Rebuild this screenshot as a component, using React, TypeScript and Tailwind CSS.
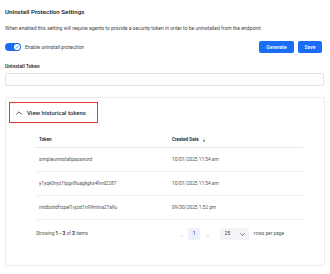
import React from "react";

const rows = [
  { token: "simpleuninstallpassword", date: "10/01/2025 11:54 am" },
  { token: "y1yqk0nyz1lpgv8luagkgkx4fvrd2287", date: "10/01/2025 11:54 am" },
  { token: "nndbohdfrzpel1vjzxt1n99mtva27a9u", date: "09/30/2025 1:52 pm" },
];

export default function App() {
  return (
    <div
      className="w-[330px] h-[274px] bg-white px-[5px] text-[#333]"
      style={{ fontFamily: "Roboto, 'Liberation Sans', sans-serif" }}
    >
      <div className="pt-[8px] text-[6.2px] leading-[8px] font-semibold text-[#2a2a2a]">
        Uninstall Protection Settings
      </div>
      <div className="mt-[9px] text-[5px] leading-[7px] text-[#444]">
        When enabled this setting will require agents to provide a security token in order to be uninstalled from the endpoint.
      </div>
      <div className="mt-[9px] flex items-center h-[12px]">
        <div className="flex items-center gap-[4px]">
          <div className="w-[16px] h-[8px] rounded-full bg-[#1a6cf5] flex items-center justify-end pr-[1px]">
            <div className="w-[6px] h-[6px] rounded-full bg-white flex items-center justify-center">
              <svg width="4" height="4" viewBox="0 0 10 10">
                <path d="M2 5.2 L4.2 7.2 L8 2.8" fill="none" stroke="#1a6cf5" strokeWidth="1.8" strokeLinecap="round" strokeLinejoin="round" />
              </svg>
            </div>
          </div>
          <span className="text-[5px] leading-[7px] text-[#444]">Enable uninstall protection</span>
        </div>
        <div className="ml-auto mr-[3px] flex gap-[4px]">
          <button className="h-[12px] w-[35px] rounded-[2px] bg-[#1b6cf6] text-white text-[5px] font-medium leading-[12px]">
            Generate
          </button>
          <button className="h-[12px] w-[24px] rounded-[2px] bg-[#1b6cf6] text-white text-[5px] font-medium leading-[12px]">
            Save
          </button>
        </div>
      </div>
      <div className="mt-[10px] text-[5px] leading-[7px] font-semibold text-[#2a2a2a]">Uninstall Token</div>
      <div className="mt-[3px] h-[13px] w-[319px] rounded-[2px] border border-[#e3e3e3]"></div>
      <div className="mt-[11px] h-[169px] w-[320px] rounded-[2px] border border-[#ececec] pl-[3px] pt-[4px]">
        <div className="w-[89px] h-[21px] border border-[#e23b3b] flex items-center pl-[6px] gap-[5px]">
          <svg width="6" height="4" viewBox="0 0 10 6">
            <path d="M1 5 L5 1 L9 5" fill="none" stroke="#333" strokeWidth="1.4" strokeLinecap="round" strokeLinejoin="round" />
          </svg>
          <span className="text-[6px] leading-[8px] font-medium text-[#2a2a2a]">View historical tokens</span>
        </div>
        <div className="ml-[27px] mt-[13px] w-[267px]">
          <div className="flex h-[12px] items-center border-b border-[#e8e8e8] pb-[2px]">
            <div className="w-[136px] pl-[3px] text-[4.6px] font-semibold text-[#222]">Token</div>
            <div className="flex items-center gap-[3px] text-[4.6px] font-semibold text-[#222]">
              Created Date
              <svg width="4" height="6" viewBox="0 0 6 10">
                <path d="M1 4 L3 1.5 L5 4 Z" fill="#bbb" />
                <path d="M1 6 L3 8.5 L5 6 Z" fill="#333" />
              </svg>
            </div>
          </div>
          {rows.map((r) => (
            <div key={r.token} className="flex h-[24px] items-center border-b-[1.5px] border-[#efefef] text-[4.8px] text-[#555]">
              <div className="w-[136px] pl-[3px]">{r.token}</div>
              <div>{r.date}</div>
            </div>
          ))}
          <div className="flex items-center h-[12px] mt-[8px] text-[4.8px] text-[#555]">
            <span className="w-[145px]">
              Showing <span className="font-bold text-[#333]">1 - 3</span> of <span className="font-bold text-[#333]">3</span> items
            </span>
            <div className="flex items-center">
              <span className="text-[#aaa] text-[6px] w-[7px]">‹</span>
              <div className="w-[12px] h-[12px] rounded-[2px] bg-[#eef1fb] text-[#1d3f8f] flex items-center justify-center font-medium">1</div>
              <span className="text-[#aaa] text-[6px] ml-[7px]">›</span>
              <div className="ml-[11px] w-[29px] h-[12px] rounded-[2px] bg-[#f3f4f7] flex items-center pl-[5px] pr-[4px] text-[#333]">
                25
                <svg className="ml-auto" width="5" height="3" viewBox="0 0 10 6">
                  <path d="M1 1 L5 5 L9 1" fill="none" stroke="#555" strokeWidth="1.4" strokeLinecap="round" strokeLinejoin="round" />
                </svg>
              </div>
              <span className="ml-[5px] text-[#555]">rows per page</span>
            </div>
          </div>
        </div>
      </div>
    </div>
  );
}
